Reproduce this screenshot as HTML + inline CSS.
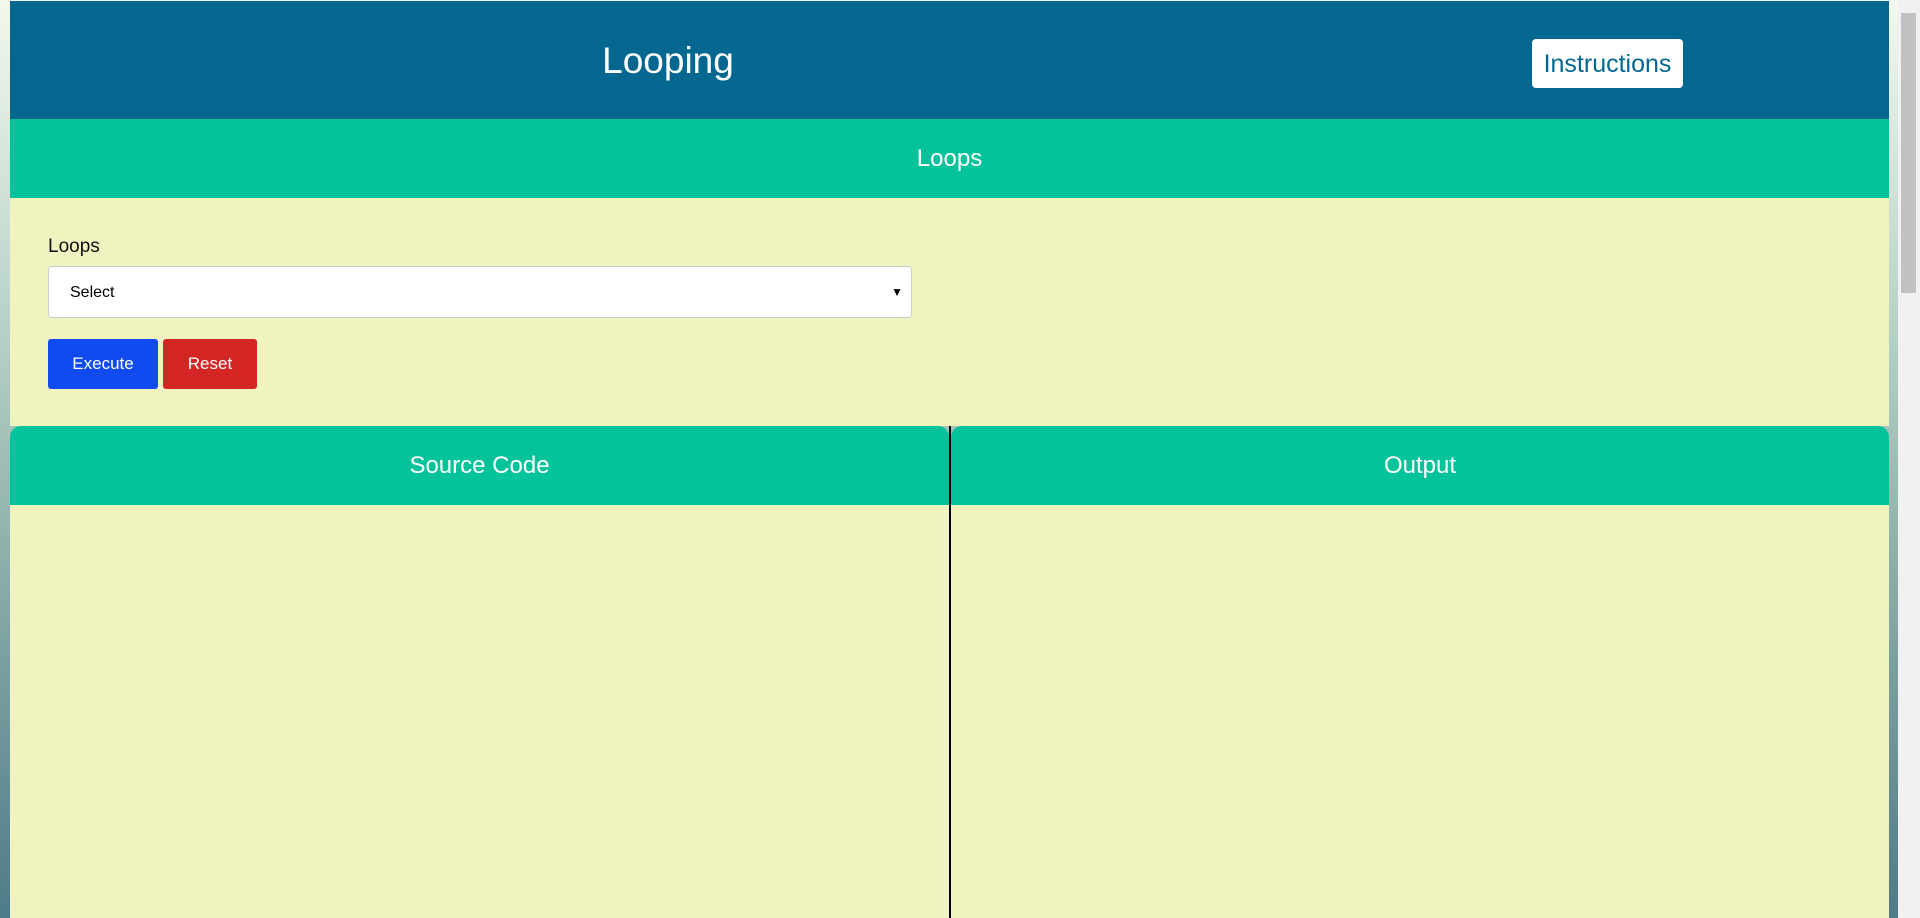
<!DOCTYPE html>
<html><head><meta charset="utf-8"><style>
html,body{margin:0;padding:0;}
body{width:1920px;height:918px;overflow:hidden;position:relative;font-family:"Liberation Sans",Arial,sans-serif;
background:linear-gradient(to bottom,#f2f8ee 0%,#b8d2c8 35%,#8fb0ab 60%,#4e7b88 100%);}
.abs{position:absolute;}
#hdr{left:10px;top:1px;width:1879px;height:118px;background:#046790;}
#title{left:10px;width:1316px;top:40px;text-align:center;color:#fff;font-size:37px;}
#instr{left:1532px;top:39px;width:151px;height:49px;background:#fff;border-radius:4px;color:#046790;font-size:25px;line-height:51px;text-align:center;}
#bar{left:10px;top:119px;width:1879px;height:79px;background:#04c39a;color:#fff;font-size:24px;text-align:center;line-height:80px;}
#panel{left:10px;top:198px;width:1879px;height:228px;background:#f0f3c0;}
#lbl{left:48px;top:236px;font-size:19px;color:#111;}
#sel{left:48px;top:266px;width:864px;height:52px;background:#fff;border:1px solid #ccc;border-radius:4px;box-sizing:border-box;font-size:16px;line-height:51px;padding-left:21px;color:#000;}
#sel span{position:absolute;right:8px;top:0;font-size:12px;}
.btn{top:339px;height:50px;border-radius:3px;color:#fff;font-size:17px;line-height:50px;text-align:center;}
.ph{top:426px;height:79px;background:#04c39a;color:#fff;font-size:24px;text-align:center;line-height:80px;border-radius:11px 11px 0 0;}
.pb{top:505px;height:413px;background:#f0f3c0;}
#sb{left:1898px;top:0;width:22px;height:918px;background:#f1f1f1;}
</style></head><body>
<div id="hdr" class="abs"></div>
<div id="title" class="abs">Looping</div>
<div id="instr" class="abs">Instructions</div>
<div id="bar" class="abs">Loops</div>
<div id="panel" class="abs"></div>
<div id="lbl" class="abs">Loops</div>
<div id="sel" class="abs">Select<span>▼</span></div>
<div class="abs btn" style="left:48px;width:110px;background:#0f4bef;">Execute</div>
<div class="abs btn" style="left:163px;width:94px;background:#d42525;">Reset</div>
<div class="abs ph" style="left:10px;width:939px;">Source Code</div>
<div class="abs ph" style="left:951px;width:938px;">Output</div>
<div class="abs pb" style="left:10px;width:939px;"></div>
<div class="abs pb" style="left:951px;width:938px;"></div>
<div class="abs" style="left:949px;top:426px;width:2px;height:492px;background:#000;"></div>
<div id="sb" class="abs"><div style="position:absolute;left:3px;top:13px;width:15px;height:280px;background:#c1c1c1;"></div></div>
</body></html>
